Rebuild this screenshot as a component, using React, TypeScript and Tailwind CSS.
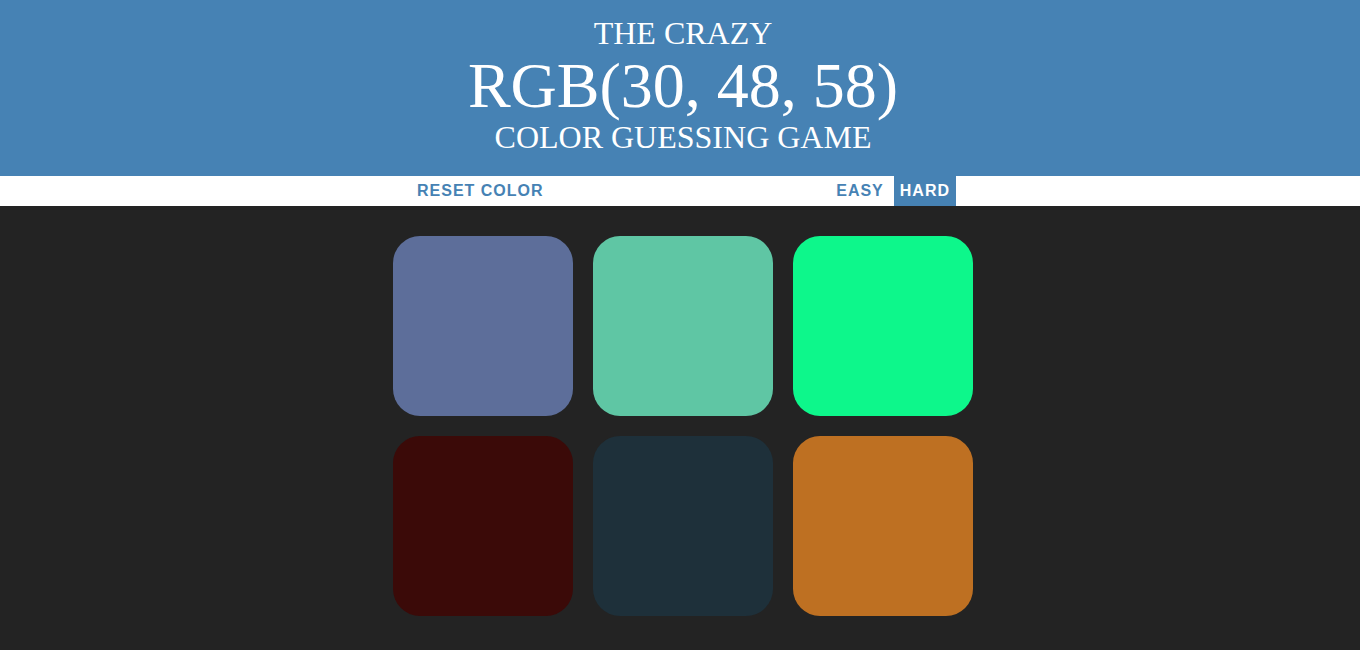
const colors = [
	"#5d6e9a",
	"#5fc6a4",
	"#0df78b",
	"#3b0a08",
	"#1e303a",
	"#be7022",
];

const Square = ({ color }: { color: string }) => {
	return <div className="h-[180px] w-[180px] rounded-[27px]" style={{ backgroundColor: color }}></div>;
};

export default function App() {
	return (
		<div className="min-h-[650px] bg-[#232323]">
			<h1 className="h-[176px] bg-[#4682b4] pl-[6px] pt-[15px] text-center font-['Liberation_Serif',serif] font-normal text-white">
				<div className="text-[32px] leading-[36px]">THE CRAZY</div>
				<div className="text-[64px] leading-[70px]">RGB(30, 48, 58)</div>
				<div className="text-[32px] leading-[32px]">COLOR GUESSING GAME</div>
			</h1>
			<div className="h-[30px] bg-white font-['Liberation_Sans',sans-serif] text-[16px] font-bold text-[#4682b4]">
				<div className="mx-auto flex h-full w-[600px] items-center">
					<button className="ml-[31px] h-full px-[6px] tracking-[1px]">RESET COLOR</button>
					<span className="flex-1"></span>
					<button className="h-full px-[6px] tracking-[1px]">EASY</button>
					<button className="ml-[4px] mr-[24px] h-full bg-[#4682b4] px-[6px] tracking-[1px] text-white">HARD</button>
				</div>
			</div>
			<div className="mx-auto w-[600px] pl-[13px] pr-[7px] pt-[30px]">
				<div className="grid grid-cols-3 gap-[20px]">
					{colors.map((c, i) => {
						return <Square color={c} key={i} />;
					})}
				</div>
			</div>
		</div>
	);
}
